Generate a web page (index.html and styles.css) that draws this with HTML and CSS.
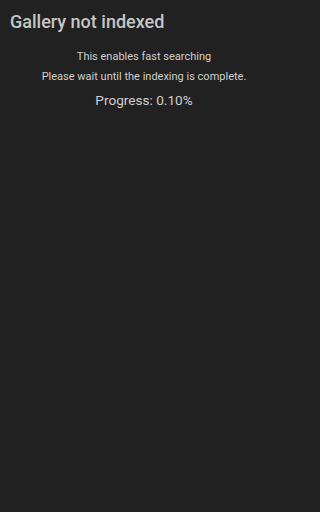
FILE: index.html
```html
<!DOCTYPE html>
<html>
<head>
<meta charset="utf-8">
<link rel="stylesheet" href="styles.css">
</head>
<body>
<div class="screen">
  <h1 class="title">Gallery not indexed</h1>
  <p class="info first">This enables fast searching</p>
  <p class="info">Please wait until the indexing is complete.</p>
  <p class="progress">Progress: 0.10%</p>
</div>
</body>
</html>
```
FILE: styles.css
```css
html, body {
  margin: 0;
  padding: 0;
  background: #212121;
}
.screen {
  width: 288px;
  height: 512px;
  background: #212121;
  font-family: Roboto, "Noto Sans", sans-serif;
  display: flex;
  flex-direction: column;
  box-sizing: border-box;
  padding-top: 10px;
}
.title {
  margin: 0 0 0 10px;
  font-size: 18px;
  font-weight: 500;
  line-height: 24px;
  color: #c6c6c6;
}
.info {
  margin: 0;
  text-align: center;
  font-size: 11px;
  line-height: 20px;
  color: #cfcfcf;
}
.info.first {
  margin-top: 13px;
}
.progress {
  margin: 3px 0 0 0;
  text-align: center;
  font-size: 13.6px;
  line-height: 20px;
  color: #cfcfcf;
}
```
